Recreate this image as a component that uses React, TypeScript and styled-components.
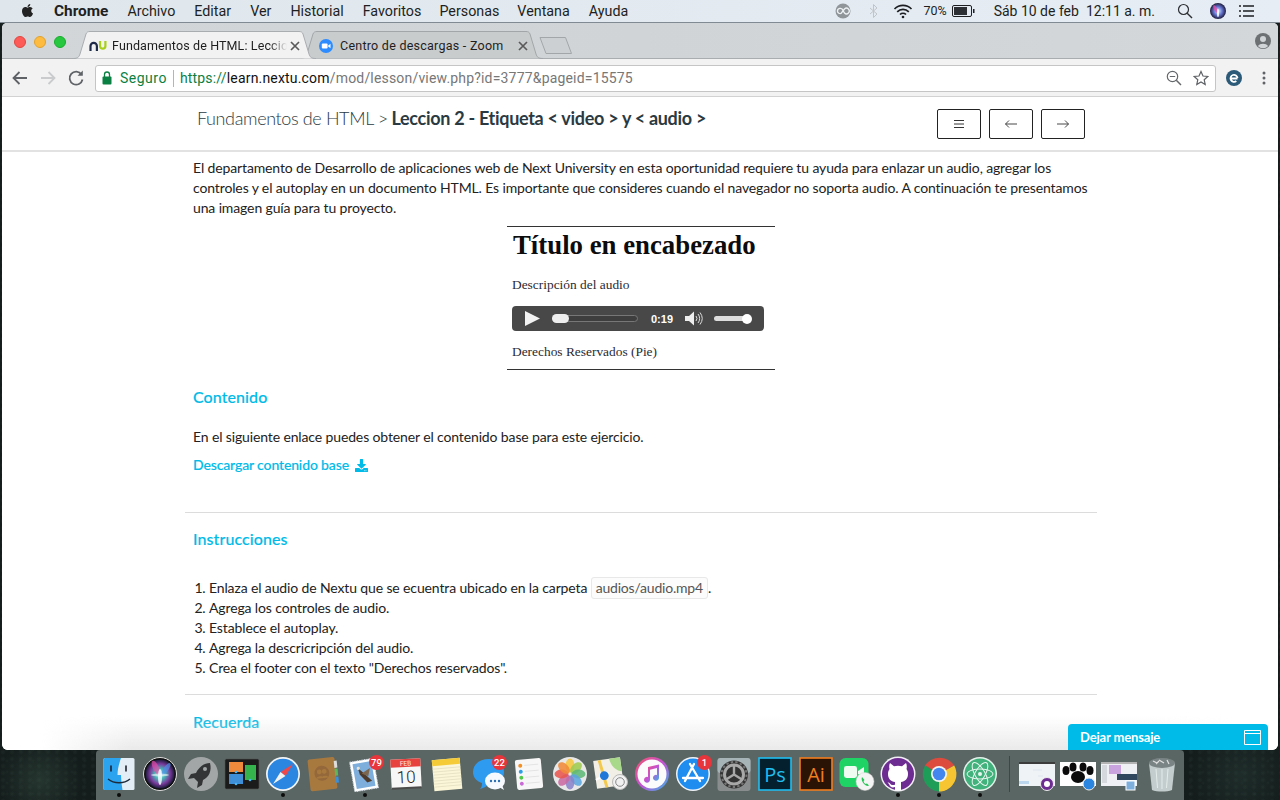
import React from "react";
import styled, { createGlobalStyle } from "styled-components";
import { FaApple, FaDownload } from "react-icons/fa";

const Global = createGlobalStyle`
  html, body { margin: 0; padding: 0; width: 1280px; height: 800px; overflow: hidden; background: #131c1b; }
  * { box-sizing: border-box; }
`;

const Desktop = styled.div`
  width: 1280px; height: 800px; overflow: hidden; display: flex; flex-direction: column;
  background:
    radial-gradient(circle at 3px 3px, rgba(70,95,80,.16) 0, transparent 3px) 0 0 / 9px 7px,
    radial-gradient(circle at 7px 2px, rgba(60,85,75,.14) 0, transparent 2px) 0 0 / 13px 11px,
    radial-gradient(circle at 40px 780px, #25352f 0, transparent 42px),
    radial-gradient(circle at 1240px 775px, #1e2c2a 0, transparent 50px),
    #141d1c;
`;

/* ---------- macOS menu bar ---------- */
const MenuBar = styled.header`
  height: 23px; flex: none; display: flex; align-items: center; padding: 0 0 1px 20px;
  background: linear-gradient(90deg, #dfe6ec, #e6edf4);
  color: #1d1f22; font: 14px/22px Roboto, "Liberation Sans", sans-serif; border-bottom: 1px solid #7f8a92;
`;
const MenuGroup = styled.nav`display: flex; align-items: center; font-size: 14.3px;`;
const AppleMark = styled(FaApple)`margin-right: 19px; color: #222;`;
const MenuItem = styled.span<{ $gap?: number; $bold?: boolean; $left?: number; $small?: boolean }>`
  margin-right: ${p => p.$gap ?? 0}px;
  margin-left: ${p => p.$left ?? 0}px;
  font-weight: ${p => (p.$bold ? 700 : 400)};
  font-size: ${p => (p.$bold ? "15.4px" : p.$small ? "12.5px" : "inherit")};
`;
const Status = styled.div`margin-left: auto; display: flex; align-items: center; padding-right: 26px;`;
const StatusGap = styled.span<{ $w: number }>`display: inline-block; flex: none; width: ${p => p.$w}px;`;

/* ---------- Chrome window ---------- */
const Window = styled.main`
  flex: none; height: 727px; margin: 0 2px; border-radius: 5px 5px 6px 6px; overflow: hidden;
  display: flex; flex-direction: column; background: #fff; position: relative;
`;
const TabStrip = styled.div`
  height: 36px; flex: none; display: flex; align-items: flex-end; padding-left: 12px;
  background: linear-gradient(90deg, #d2d6d9, #d0d4d7 50%, #d3d7da); border-bottom: 1px solid #a9adb0; position: relative;
`;
const Lights = styled.div`display: flex; gap: 8px; align-self: flex-start; margin-top: 13px; margin-right: 7px;`;
const Light = styled.span<{ $c: string; $b: string }>`
  width: 12px; height: 12px; border-radius: 50%; background: ${p => p.$c}; border: 1px solid ${p => p.$b};
`;
const Tab = styled.div<{ $active?: boolean }>`
  width: 243px; height: 28px; position: relative; display: flex; align-items: center;
  margin-bottom: -1px; margin-left: ${p => (p.$active ? 0 : -16)}px; z-index: ${p => (p.$active ? 2 : 1)};
  padding-left: ${p => (p.$active ? 16 : 17)}px; padding-top: 1px;
`;
const TabShape = styled.svg`position: absolute; inset: 0; width: 100%; height: 100%;`;
const TabBody = styled.div`position: relative; display: flex; align-items: center; flex: 1; font: 12.5px Roboto, "Liberation Sans", sans-serif; color: #1e1e1e;`;
const TabIcon = styled.span`width: 18px; height: 16px; display: flex; align-items: center; justify-content: center; margin-right: 5px;`;
const TabTitle = styled.span<{ $fade?: boolean }>`
  width: 175px; white-space: nowrap; letter-spacing: ${p => (p.$fade ? ".12px" : ".25px")};
  ${p => p.$fade ? "-webkit-mask-image: linear-gradient(90deg,#000 90%,transparent 100%); mask-image: linear-gradient(90deg,#000 90%,transparent 100%);" : ""}
`;
const NewTab = styled.svg`width: 34px; height: 17px; margin-left: -4px; margin-bottom: 4px; flex: none; position: relative; z-index: 0;`;
const Avatar = styled.svg`position: absolute; right: 7px; top: 10px; width: 16px; height: 16px;`;
const Toolbar = styled.div`
  height: 38px; flex: none; display: flex; align-items: center; padding: 1px 0 0 8px;
  background: #f2f2f2; border-bottom: 1px solid #d2d2d2; gap: 0;
`;
const NavBtn = styled.svg`width: 20px; height: 20px; flex: none; margin-right: 8px;`;
const AddressBar = styled.div`
  width: 1121px; height: 27px; margin-left: 1px; background: #fff; border: 1px solid #c5c5c5; border-radius: 3px;
  display: flex; align-items: center; padding: 0 0 0 5px; font: 14px Roboto, "Liberation Sans", sans-serif;
  letter-spacing: .18px;
`;
const Secure = styled.span`color: #0b8043; margin-left: 7px; letter-spacing: .5px;`;
const Sep = styled.span`width: 1px; height: 17px; background: #b5b5b5; margin: 0 6px;`;
const UrlDim = styled.span`color: #777;`;
const UrlHost = styled.span`color: #111;`;
const UrlScheme = styled.span`color: #0b8043;`;
const AddressEnd = styled.div`margin-left: auto; display: flex; align-items: center; gap: 11px; padding-right: 6px;`;
const Extras = styled.div`display: flex; align-items: center; margin-left: 10px; gap: 14px;`;
const SmallIcon = styled.svg<{ $w?: number; $h?: number }>`
  width: ${p => p.$w ?? 16}px; height: ${p => p.$h ?? 16}px; flex: none; display: block;
`;

/* ---------- page ---------- */
const Page = styled.div`
  flex: 1; position: relative; overflow: hidden; font: 14px/20px Lato, sans-serif; color: #222; background: #fff;
  letter-spacing: -.13px;
`;
const Header = styled.div`height: 55px; border-bottom: 2px solid #e2e2e2;`;
const HeaderInner = styled.div`
  width: 912px; margin: 0 0 0 183px; padding: 12px 12px 0; display: flex; justify-content: space-between; align-items: flex-start;
`;
const Crumb = styled.div`font: 300 18px/18px Lato, sans-serif; color: #2b3a42; letter-spacing: -.37px;`;
const CrumbStrong = styled.strong`font-weight: 700; font-size: 18px; color: #2b3a42; letter-spacing: -.3px; margin-left: -1px;`;
const Btns = styled.div`display: flex; gap: 8px;`;
const NavSquare = styled.button`
  width: 44px; height: 30px; border: 1px solid #222; border-radius: 2px; background: #fff; padding: 0;
  display: flex; align-items: center; justify-content: center;
`;
const Column = styled.div`width: 912px; margin-left: 183px; padding-top: 6px;`;
const Section = styled.section`padding: 0 8px;`;
const Para = styled.p<{ $top?: number }>`margin: ${p => p.$top ?? 0}px 0 0; width: 896px;`;
const Figure = styled.figure`
  width: 268px; height: 144px; margin: 8px auto 0; border-top: 1px solid #333; border-bottom: 1px solid #333;
  padding: 0 5px; font-family: "Liberation Serif", serif; color: #2a2a33; letter-spacing: 0;
`;
const FigTitle = styled.div`font: 700 26.8px/36px "Liberation Serif", serif; color: #0c0c0c; padding-left: 1px;`;
const FigText = styled.div<{ $top: number }>`font-size: 13.4px; line-height: 16px; margin-top: ${p => p.$top}px;`;
const Player = styled.div`
  width: 252px; height: 25px; margin-top: 13px; background: #484848; border-radius: 4px; display: flex; align-items: center;
  padding-left: 13px; color: #fff; font: 700 11px "Liberation Sans", sans-serif;
`;
const PlayIcon = styled.svg`width: 15px; height: 15px; flex: none;`;
const SpeakerIcon = styled.svg`width: 20px; height: 15px; flex: none; margin-left: 12px;`;
const Track = styled.span`width: 86px; height: 7px; margin-left: 12px; border: 1px solid #777; border-radius: 4px; display: block; background: #3e3e3e; position: relative;`;
const Progress = styled.span`position: absolute; left: -1px; top: -2px; width: 17px; height: 9px; background: #eee; border-radius: 5px;`;
const Time = styled.span`margin-left: 13px;`;
const VolumeBar = styled.span`width: 37px; height: 5px; background: #ddd; border-radius: 3px; margin-left: 9px; position: relative;`;
const Knob = styled.span`position: absolute; right: -1px; top: -2.5px; width: 10px; height: 10px; background: #fff; border-radius: 50%;`;
const Heading = styled.h3<{ $top: number }>`
  margin: ${p => p.$top}px 0 0; font: 500 16px/22px Lato, sans-serif; color: #00bbe8; letter-spacing: .08px;
  -webkit-text-stroke: .15px #00bbe8;
`;
const LinkRow = styled.a`
  display: flex; align-items: center; gap: 6px; margin-top: 8px; color: #00bbe8; font-weight: 500;
  -webkit-text-stroke: .15px #00bbe8;
`;
const Rule = styled.hr<{ $top: number }>`margin: ${p => p.$top}px 0 0; border: 0; border-top: 1px solid #dcdcdc;`;
const Steps = styled.ol`margin: 28px 0 0; padding: 0 0 0 16px;`;
const Code = styled.code`
  font: 14px Lato, sans-serif; color: #555; border: 1px solid #e8e8e8; border-radius: 3px; padding: 1px 4px 2px; background: #fcfcfc;
  letter-spacing: -.2px;
`;
const Widget = styled.div`
  position: absolute; right: 10px; bottom: 0; width: 200px; height: 26px; background: #00bbe8; border-radius: 4px 4px 0 0;
  color: #fff; font: 700 13px/26px Lato, sans-serif; padding: 0 7px 0 12px; display: flex; align-items: center; justify-content: space-between;
  letter-spacing: -.15px;
`;
const BottomFade = styled.div`
  position: absolute; left: 40px; right: 40px; bottom: 0; height: 34px; pointer-events: none;
  background: linear-gradient(180deg, rgba(225,225,225,0), rgba(225,225,225,.7));
  -webkit-mask-image: linear-gradient(90deg, transparent, #000 90px, #000 calc(100% - 90px), transparent);
  mask-image: linear-gradient(90deg, transparent, #000 90px, #000 calc(100% - 90px), transparent);
`;

/* ---------- Dock ---------- */
const Dock = styled.footer`
  flex: none; width: 1088px; height: 50px; margin-left: 96px; background: #5a6663; border-radius: 4px 4px 0 0;
  display: flex; padding-left: 2px;
`;
const Slot = styled.div`width: 41px; flex: none; position: relative; display: flex; flex-direction: column; align-items: center; padding-top: 6px;`;
const Indicator = styled.span<{ $on?: boolean }>`
  width: 4px; height: 4px; border-radius: 50%; margin-top: 1px; background: ${p => (p.$on ? "#0c0c0c" : "transparent")};
`;
const IconSvg = styled.svg`width: 36px; height: 36px; display: block; flex: none;`;
const Badge = styled.span`
  position: absolute; left: 25px; top: 5px; min-width: 15px; height: 15px; border-radius: 8px; background: #e8343b; color: #fff;
  font: 500 9.5px/15px Roboto, sans-serif; text-align: center;
`;
const DockSep = styled.span`width: 1px; height: 36px; background: #3d4745; margin: 6px 6px 0 9px; flex: none;`;
const TrashSlot = styled(Slot)`margin-left: 2px;`;

type I = { children: React.ReactNode };
const G = ({ children }: I) => <IconSvg viewBox="0 0 36 36">{children}</IconSvg>;

const Finder = () => (
  <G>
    <rect x="2.5" y="2" width="31" height="32" rx="1.5" fill="#e3edf6" />
    <path d="M4 2h16c-2 6-3.5 11-3.500 17H20c0 5 .5 10 1.500 15H4a1.500 1.500 0 0 1-1.500-1.500v-29A1.500 1.500 0 0 1 4 2z" fill="#2ba3ee" />
    <path d="M10 10v5M25 10v5" stroke="#223" strokeWidth="1.6" strokeLinecap="round" />
    <path d="M7 23c6 5 16 5 22 0" stroke="#1d2a3a" strokeWidth="1.3" fill="none" />
  </G>
);
const Siri = () => (
  <G>
    <defs><radialGradient id="sr"><stop offset="0" stopColor="#c9f4ee" /><stop offset=".35" stopColor="#49b8b6" /><stop offset=".7" stopColor="#7a3a9c" /><stop offset="1" stopColor="#1c1b3a" /></radialGradient></defs>
    <circle cx="18" cy="18" r="16.5" fill="#111" stroke="#ddd" strokeWidth="1" />
    <circle cx="18" cy="18" r="14.5" fill="url(#sr)" />
    <ellipse cx="14" cy="12" rx="3" ry="8" fill="#e24da8" opacity=".7" transform="rotate(-25 14 12)" />
    <ellipse cx="24" cy="13" rx="2.500" ry="7" fill="#4f8fe8" opacity=".7" transform="rotate(35 24 13)" />
    <ellipse cx="18" cy="21" rx="2" ry="8" fill="#f2fbff" opacity=".85" />
    <ellipse cx="18" cy="19" rx="9" ry="1.500" fill="#f2fbff" opacity=".6" />
  </G>
);
const Launchpad = () => (
  <G>
    <circle cx="18" cy="18" r="17" fill="#a3a6a7" />
    <path d="M27 7c-6 0-11 4-14 10l-5 1-3 5 6-1 4 4-1 6 5-3 1-5c6-3 9-9 7-17z" fill="#333436" />
    <circle cx="22" cy="13" r="2" fill="#a3a6a7" />
  </G>
);
const Mission = () => (
  <G>
    <rect x="1" y="3" width="34" height="30" rx="1.5" fill="#1b1b1b" stroke="#555" strokeWidth=".6" />
    <rect x="5" y="6" width="14" height="10" fill="#ef8a3c" />
    <rect x="21" y="9" width="11" height="15" fill="#35b24b" />
    <rect x="5" y="18" width="14" height="10" fill="#3f8fd8" />
    <circle cx="12" cy="16" r="1.3" fill="#45b5f5" /><circle cx="12" cy="28" r="1.3" fill="#45b5f5" /><circle cx="26" cy="24" r="1.3" fill="#45b5f5" />
  </G>
);
const Safari = () => (
  <G>
    <circle cx="18" cy="18" r="17" fill="#f3f5f7" />
    <circle cx="18" cy="18" r="15.3" fill="#2a86e0" />
    <path d="M28 8L15.500 16 20.500 20z" fill="#f0484a" />
    <path d="M8 28l7.500-12 5 4z" fill="#f2f2f2" />
  </G>
);
const Contacts = () => (
  <G>
    <g transform="rotate(-6 18 18)">
      <rect x="3" y="2" width="27" height="32" rx="2" fill="#a8793f" />
      <rect x="29" y="6" width="3" height="7" fill="#ddd" /><rect x="29" y="14" width="3" height="7" fill="#5cb75c" /><rect x="29" y="22" width="3" height="6" fill="#3a8fd8" />
      <circle cx="16" cy="17" r="7.500" fill="#94683a" />
      <circle cx="13.500" cy="15.500" r="2.400" fill="#a8793f" /><circle cx="18.500" cy="15.500" r="2.400" fill="#a8793f" />
      <path d="M10 22c0-3 7-3 7 0zM15 22c0-3 7-3 7 0z" fill="#a8793f" />
    </g>
  </G>
);
const Mail = () => (
  <G>
    <g transform="rotate(-10 17 19)">
      <rect x="5" y="4" width="24" height="30" fill="#fff" stroke="#cfd6df" strokeDasharray="1.400 1" />
      <rect x="7.500" y="6.500" width="19" height="25" fill="#7eaedc" />
      <path d="M12 11l5 6 7 9-5 1-6-9z" fill="#4f3b2c" />
      <path d="M15 17l9-4-3 8z" fill="#7d664e" />
      <circle cx="12.500" cy="11.500" r="1.600" fill="#e9e3d5" />
    </g>
  </G>
);
const Calendar = () => (
  <G>
    <g transform="rotate(-3 18 18)">
      <rect x="3" y="3" width="30" height="29" fill="#f7f7f7" />
      <rect x="3" y="3" width="30" height="8" fill="#e8423f" />
      <text x="18" y="9.700" textAnchor="middle" fontFamily="Roboto, sans-serif" fontSize="6.500" fill="#ffe7e4">FEB</text>
      <text x="18" y="27" textAnchor="middle" fontFamily="Roboto, sans-serif" fontWeight="300" fontSize="17" fill="#222">10</text>
      <rect x="3" y="31" width="30" height="2" fill="#4a4a4a" />
    </g>
  </G>
);
const Notes = () => (
  <G>
    <g transform="rotate(-5 18 18)">
      <rect x="4" y="3" width="28" height="31" fill="#fbf6d8" />
      <rect x="4" y="3" width="28" height="6" fill="#f5cc38" />
      <path d="M4 12h28M4 15h28M4 18h28M4 21h28M4 24h28M4 27h28M4 30h28" stroke="#dcd7b8" strokeWidth=".6" />
    </g>
  </G>
);
const Messages = () => (
  <G>
    <path d="M19 3c9 0 15 6 15 13s-5 12-12 13l-3-1c-2 2-5 4-9 5 2-2 2-4 2-6C6 25 3 21 3 16 3 8 10 3 19 3z" fill="#2f9bf0" />
    <ellipse cx="25" cy="25" rx="10" ry="8.500" fill="#f6fafe" />
    <path d="M29 31l5 3-2-5z" fill="#f6fafe" />
    <circle cx="21" cy="25" r="1.200" fill="#2d6fb5" /><circle cx="25" cy="25" r="1.200" fill="#2d6fb5" /><circle cx="29" cy="25" r="1.200" fill="#2d6fb5" />
  </G>
);
const Reminders = () => (
  <G>
    <g transform="rotate(-5 18 18)">
      <rect x="5" y="3" width="26" height="30" rx="2" fill="#f7f7f7" />
      <circle cx="10" cy="9" r="2" fill="#f38f23" /><circle cx="10" cy="15" r="2" fill="#2a9ee6" /><circle cx="10" cy="21" r="2" fill="#4fc947" /><circle cx="10" cy="27" r="2" fill="#c96ad6" />
      <path d="M14 9h14M14 15h14M14 21h14M14 27h14" stroke="#ddd" strokeWidth=".7" />
    </g>
  </G>
);
const Photos = () => {
  const cols = ["#f7c63e", "#9fcb4e", "#5fb875", "#5ba6de", "#8a83c9", "#c96aa2", "#e8574f", "#f08a3a"];
  return (
    <G>
      <circle cx="18" cy="18" r="17" fill="#e8e8e8" />
      {cols.map((c, i) => (
        <ellipse key={c} cx="18" cy="9.500" rx="4.400" ry="7" fill={c} opacity=".88" transform={`rotate(${i * 45} 18 18)`} />
      ))}
    </G>
  );
};
const Maps = () => (
  <G>
    <g transform="rotate(-8 16 17)">
      <rect x="2" y="3" width="27" height="28" fill="#f2efe6" />
      <path d="M18 3h11v14c-6-1-10-7-11-14z" fill="#a8d88a" />
      <path d="M8 3l4 28" stroke="#f2c94c" strokeWidth="3" />
      <path d="M2 22l14-5" stroke="#fff" strokeWidth="2" />
      <circle cx="11" cy="19" r="4.400" fill="#1f78d8" />
    </g>
    <circle cx="27" cy="26" r="7.500" fill="#f0f0f0" stroke="#b9b9b9" />
    <circle cx="27" cy="26" r="4.300" fill="none" stroke="#888" />
  </G>
);
const Music = () => (
  <G>
    <defs><linearGradient id="ms" x1="0" y1="0" x2="1" y2="1"><stop offset="0" stopColor="#f2546a" /><stop offset=".5" stopColor="#c452d4" /><stop offset="1" stopColor="#31b8e6" /></linearGradient></defs>
    <circle cx="18" cy="18" r="17" fill="url(#ms)" />
    <circle cx="18" cy="18" r="14.500" fill="#fbfbfb" />
    <path d="M14 11l11-2.500v13.300a3 3 0 1 1-2-2.800V12l-7 1.700v10.100a3 3 0 1 1-2-2.800z" fill="url(#ms)" />
  </G>
);
const AppStore = () => (
  <G>
    <circle cx="18" cy="18" r="17" fill="#f0f4f8" />
    <circle cx="18" cy="18" r="15.500" fill="#1f8cf0" />
    <path d="M19 8l-9 17M15 8l10 17M8 22h20" stroke="#fff" strokeWidth="2.300" strokeLinecap="round" />
  </G>
);
const SysPrefs = () => (
  <G>
    <rect x="1.500" y="2" width="33" height="33" rx="3" fill="#8a8d8e" />
    <rect x="1.500" y="2" width="33" height="15" rx="3" fill="#a6b4b8" />
    <circle cx="18" cy="18.500" r="14" fill="#333" />
    <circle cx="18" cy="18.500" r="9.500" fill="none" stroke="#a8a8a8" strokeWidth="3" />
    <path d="M18 18.500V9M18 18.500l8 5M18 18.500l-8 5" stroke="#a8a8a8" strokeWidth="2.400" />
    <circle cx="18" cy="18.500" r="12.500" fill="none" stroke="#777" strokeWidth="2" strokeDasharray="2.400 2.200" />
  </G>
);
const Adobe = ({ label, edge, bg }: { label: string; edge: string; bg: string }) => (
  <G>
    <rect x="2" y="2" width="32" height="32" fill={bg} stroke={edge} strokeWidth="1.600" />
    <text x="18" y="26" textAnchor="middle" fontFamily="'Open Sans', sans-serif" fontSize="20" fill={edge}>{label}</text>
  </G>
);
const FaceTime = () => (
  <G>
    <rect x="0.500" y="2" width="29" height="29" rx="6" fill="#1fd365" />
    <rect x="5" y="10" width="13" height="12" rx="2.400" fill="#eefcf2" />
    <path d="M19 15l6-4v11l-6-4z" fill="#eefcf2" />
    <circle cx="26" cy="25.500" r="9" fill="#f4f4f4" stroke="#ccc" strokeWidth=".5" />
    <path d="M23 21c-1 2 0 5 2 7s4 2.500 5 1.500l-2-2-1.500.5c-1-.5-1.500-1.500-2-3l1-1z" fill="#23c552" />
  </G>
);
const GitHub = () => (
  <G>
    <circle cx="18" cy="18" r="17.500" fill="#f1eef5" />
    <circle cx="18" cy="18" r="16" fill="#6d2c91" />
    <path d="M10 7l4 3.200c2.500-.7 5.500-.7 8 0L26 7c1 2 1 4.500.5 6 1 1.500 1.500 3 1.500 5 0 5-3 7.500-7 8v8.500h-6V31c-3 1-5 0-6-3l-1.500-1.500c2-.5 2.500 1 3.500 2 1 .7 2 .6 4 .3V26c-4-.5-7-3-7-8 0-2 .5-3.500 1.500-5-.5-1.500-.5-4 .5-6z" fill="#fff" />
  </G>
);
const ChromeLogo = () => (
  <G>
    <path d="M18 18L4 9.500A17.500 17.500 0 0 1 33.200 9.500z" fill="#dd4b3e" />
    <path d="M18 18L33.200 9.500A17.500 17.500 0 0 1 18 35.500z" fill="#f7c531" />
    <path d="M18 18L18 35.500A17.500 17.500 0 0 1 4 9.500z" fill="#1e9d58" />
    <circle cx="18" cy="18" r="8" fill="#f4f4f4" />
    <circle cx="18" cy="18" r="6.300" fill="#4486f0" />
  </G>
);
const Atom = () => (
  <G>
    <circle cx="18" cy="18" r="17" fill="#e5f2ec" />
    <circle cx="18" cy="18" r="15.500" fill="#42b27c" />
    <g fill="none" stroke="#e6f6ee" strokeWidth="1">
      <ellipse cx="18" cy="18" rx="13" ry="5" transform="rotate(60 18 18)" />
      <ellipse cx="18" cy="18" rx="13" ry="5" transform="rotate(-60 18 18)" />
      <ellipse cx="18" cy="18" rx="13" ry="5" />
    </g>
    <circle cx="18" cy="18" r="2" fill="#e6f6ee" />
  </G>
);
const ThumbMap = () => (
  <G>
    <rect x="0" y="6" width="36" height="24" fill="#f0f3f6" />
    <rect x="0" y="6" width="36" height="2" fill="#3c3c3c" />
    <rect x="0" y="25" width="10" height="3" fill="#bcd6ee" />
    <path d="M14 14h9M19 20h5" stroke="#dde5ee" />
    <circle cx="28" cy="28" r="6.500" fill="#6d2c91" stroke="#eee" />
    <circle cx="28" cy="28" r="3" fill="#fff" />
  </G>
);
const ThumbPaw = () => (
  <G>
    <rect x="0" y="6" width="36" height="24" fill="#fff" />
    <ellipse cx="18" cy="21" rx="7" ry="6" fill="#0b0b0b" />
    <ellipse cx="6" cy="14.500" rx="3.500" ry="4.500" fill="#0b0b0b" /><ellipse cx="13" cy="11" rx="3.500" ry="4.500" fill="#0b0b0b" />
    <ellipse cx="23" cy="11" rx="3.500" ry="4.500" fill="#0b0b0b" /><ellipse cx="30" cy="14.500" rx="3.500" ry="4.500" fill="#0b0b0b" />
    <circle cx="29" cy="28" r="6" fill="#2a86e0" stroke="#eee" />
  </G>
);
const ThumbSite = () => (
  <G>
    <rect x="0" y="6" width="36" height="24" fill="#eef0f3" />
    <rect x="0" y="6" width="36" height="2" fill="#b3b3b3" />
    <rect x="8" y="9" width="12" height="9" fill="#c9a3de" />
    <rect x="16" y="18" width="20" height="6" fill="#30475e" />
    <rect x="1" y="9" width="5" height="18" fill="#d5d9de" />
    <rect x="25" y="25" width="9" height="9" fill="#7eaedc" stroke="#fff" />
  </G>
);
const Trash = () => (
  <G>
    <path d="M5 7h26l-3 27c-5 2-15 2-20 0z" fill="#c3cdcd" />
    <ellipse cx="18" cy="7" rx="13" ry="5" fill="#7a8484" />
    <path d="M9 5l4 2M15 4l5 3M23 4l2 4M12 8l3-3" stroke="#e0e0e0" strokeWidth="1.200" />
    <path d="M12 13l1.500 19M18 13v20M24 13l-1.500 19" stroke="#e4ebeb" />
  </G>
);

const items: { el: React.ReactNode; on?: boolean; badge?: string }[] = [
  { el: <Finder />, on: true }, { el: <Siri /> }, { el: <Launchpad /> }, { el: <Mission /> }, { el: <Safari />, on: true },
  { el: <Contacts /> }, { el: <Mail />, on: true, badge: "79" }, { el: <Calendar /> }, { el: <Notes /> },
  { el: <Messages />, badge: "22" }, { el: <Reminders /> }, { el: <Photos /> }, { el: <Maps /> }, { el: <Music /> },
  { el: <AppStore />, badge: "1" }, { el: <SysPrefs /> },
  { el: <Adobe label="Ps" edge="#20bdf0" bg="#04202e" /> }, { el: <Adobe label="Ai" edge="#f07d20" bg="#2a1304" /> },
  { el: <FaceTime /> }, { el: <GitHub />, on: true }, { el: <ChromeLogo />, on: true }, { el: <Atom />, on: true },
];
const minis = [<ThumbMap key="a" />, <ThumbPaw key="b" />, <ThumbSite key="c" />];

const TabOutline = ({ fill, stroke }: { fill: string; stroke: string }) => (
  <TabShape viewBox="0 0 243 28" preserveAspectRatio="none">
    <path d="M0 27.500C5 27.500 6 26 7 23L13 3C13.600 1.200 15 .5 17 .5H226C228 .5 229.400 1.200 230 3L236 23C237 26 238 27.500 243 27.500" fill={fill} stroke={stroke} />
  </TabShape>
);
const Close = () => (
  <SmallIcon viewBox="0 0 16 16"><path d="M4 4l8 8M12 4l-8 8" stroke="#5a5a5a" strokeWidth="1.700" /></SmallIcon>
);

export default function App() {
  return (
    <Desktop>
      <Global />
      <MenuBar>
        <MenuGroup>
          <AppleMark size={15} />
          <MenuItem $bold $gap={19}>Chrome</MenuItem>
          <MenuItem $gap={19}>Archivo</MenuItem>
          <MenuItem $gap={19}>Editar</MenuItem>
          <MenuItem $gap={19}>Ver</MenuItem>
          <MenuItem $gap={19}>Historial</MenuItem>
          <MenuItem $gap={18}>Favoritos</MenuItem>
          <MenuItem $gap={18}>Personas</MenuItem>
          <MenuItem $gap={19}>Ventana</MenuItem>
          <MenuItem>Ayuda</MenuItem>
        </MenuGroup>
        <Status>
          <SmallIcon $w={20} viewBox="0 0 20 16">
            <circle cx="10" cy="8" r="7.500" fill="#8f9599" />
            <path d="M4.500 8.500a2.800 2.800 0 0 1 5.500-1l1.500 2.500a2.800 2.800 0 1 0 0-4L8 10.500a2.800 2.800 0 0 1-3.500-2z" fill="none" stroke="#eef1f3" strokeWidth="1.300" />
          </SmallIcon>
          <StatusGap $w={13} />
          <SmallIcon viewBox="0 0 16 16"><path d="M4 5l7 6-3.500 3.500V1.500L11 5l-7 6" fill="none" stroke="#c0c5c9" strokeWidth="1" /></SmallIcon>
          <StatusGap $w={11} />
          <SmallIcon $w={20} viewBox="0 0 20 16">
            <path d="M1.500 6a12 12 0 0 1 17 0M4.200 8.800a8.200 8.200 0 0 1 11.600 0M7 11.500a4.300 4.300 0 0 1 6 0" fill="none" stroke="#1d1f22" strokeWidth="1.700" />
            <circle cx="10" cy="14" r="1.300" fill="#1d1f22" />
          </SmallIcon>
          <StatusGap $w={10} />
          <MenuItem $small>70%</MenuItem>
          <StatusGap $w={5} />
          <SmallIcon $w={23} $h={12} viewBox="0 0 23 12">
            <rect x=".5" y=".5" width="19" height="11" rx="1.500" fill="none" stroke="#1d1f22" />
            <rect x="2" y="2" width="13" height="8" fill="#2c2f33" />
            <rect x="21" y="4" width="1.500" height="4" fill="#1d1f22" />
          </SmallIcon>
          <MenuItem $left={19}>Sáb 10 de feb</MenuItem>
          <MenuItem $left={7}>12:11 a. m.</MenuItem>
          <StatusGap $w={22} />
          <SmallIcon viewBox="0 0 16 16"><circle cx="6.500" cy="6.500" r="5" fill="none" stroke="#2b2e32" strokeWidth="1.200" /><path d="M10.200 10.200L15 15" stroke="#2b2e32" strokeWidth="1.400" /></SmallIcon>
          <StatusGap $w={17} />
          <SmallIcon viewBox="0 0 16 16">
            <defs><radialGradient id="sr2"><stop offset="0" stopColor="#d8f6f6" /><stop offset=".5" stopColor="#6a79d8" /><stop offset="1" stopColor="#1c1b3a" /></radialGradient></defs>
            <circle cx="8" cy="8" r="8" fill="url(#sr2)" />
            <ellipse cx="5.500" cy="6" rx="1.500" ry="4" fill="#e24da8" opacity=".8" transform="rotate(-25 5.500 6)" />
            <ellipse cx="8" cy="10" rx="1" ry="4" fill="#f2fbff" />
          </SmallIcon>
          <StatusGap $w={12} />
          <SmallIcon viewBox="0 0 16 16"><path d="M1 3h2M1 8h2M1 13h2M5 3h11M5 8h11M5 13h11" stroke="#1d1f22" strokeWidth="1.500" /></SmallIcon>
        </Status>
      </MenuBar>

      <Window>
        <TabStrip>
          <Lights>
            <Light $c="#fc5b57" $b="#e2463f" />
            <Light $c="#fdbc40" $b="#e1a12d" />
            <Light $c="#27c840" $b="#17ad2c" />
          </Lights>
          <Tab $active>
            <TabOutline fill="#f2f2f2" stroke="#a9adb0" />
            <TabBody>
              <TabIcon>
                <svg width="18" height="10" viewBox="0 0 18 10">
                  <path d="M1.500 10V5a3.200 3.200 0 0 1 6.400 0v5" fill="none" stroke="#1f2a48" strokeWidth="2.200" />
                  <path d="M11 0v5a2.700 2.700 0 0 0 5.400 0V0" fill="none" stroke="#a8cf1a" strokeWidth="2.200" />
                </svg>
              </TabIcon>
              <TabTitle $fade>Fundamentos de HTML: Leccio</TabTitle>
              <Close />
            </TabBody>
          </Tab>
          <Tab>
            <TabOutline fill="#c9cccd" stroke="#a3a6a8" />
            <TabBody>
              <TabIcon>
                <svg width="14" height="14" viewBox="0 0 14 14">
                  <circle cx="7" cy="7" r="7" fill="#2d8cff" />
                  <rect x="2.800" y="4.500" width="5.800" height="5" rx="1" fill="#fff" />
                  <path d="M9.200 6.500l2.300-1.700v4.400L9.200 7.500z" fill="#fff" />
                </svg>
              </TabIcon>
              <TabTitle>Centro de descargas - Zoom</TabTitle>
              <Close />
            </TabBody>
          </Tab>
          <NewTab viewBox="0 0 34 17">
            <path d="M1 .5H26.500L32.500 16.500H7z" fill="#cdd0d2" stroke="#a3a6a8" />
          </NewTab>
          <Avatar viewBox="0 0 16 16">
            <circle cx="8" cy="8" r="8" fill="#6d7073" />
            <circle cx="8" cy="6" r="3" fill="#d0d4d7" />
            <path d="M2.800 13a6 4.500 0 0 1 10.400 0A7 7 0 0 1 2.800 13z" fill="#d0d4d7" />
          </Avatar>
        </TabStrip>

        <Toolbar>
          <NavBtn viewBox="0 0 20 20"><path d="M17 10H3.500M9.500 4l-6 6 6 6" fill="none" stroke="#5f6266" strokeWidth="1.800" /></NavBtn>
          <NavBtn viewBox="0 0 20 20"><path d="M3 10h13.500M10.500 4l6 6-6 6" fill="none" stroke="#c9cbcd" strokeWidth="1.800" /></NavBtn>
          <NavBtn viewBox="0 0 20 20"><path d="M15.500 6.500a6.500 6.500 0 1 0 1 5" fill="none" stroke="#5f6266" strokeWidth="1.800" /><path d="M16.800 2.500v5.300h-5.300z" fill="#5f6266" /></NavBtn>
          <AddressBar>
            <SmallIcon $w={12} viewBox="0 0 12 16">
              <rect x="1.500" y="6.500" width="9" height="8" rx="1" fill="#0b8043" />
              <path d="M3.500 7V4.500a2.500 2.500 0 0 1 5 0V7" fill="none" stroke="#0b8043" strokeWidth="1.300" />
            </SmallIcon>
            <Secure>Seguro</Secure>
            <Sep />
            <span>
              <UrlScheme>https://</UrlScheme><UrlHost>learn.nextu.com</UrlHost><UrlDim>/mod/lesson/view.php?id=3777&amp;pageid=15575</UrlDim>
            </span>
            <AddressEnd>
              <SmallIcon viewBox="0 0 16 16">
                <circle cx="6.500" cy="6.500" r="5.200" fill="none" stroke="#65686b" strokeWidth="1.200" />
                <path d="M10.300 10.300L15 15" stroke="#65686b" strokeWidth="1.500" /><path d="M3.800 6.500h5.400" stroke="#65686b" strokeWidth="1.200" />
              </SmallIcon>
              <SmallIcon viewBox="0 0 16 16">
                <path d="M8 1.500l2 4.500 4.800.5-3.600 3.200 1 4.800L8 12l-4.200 2.500 1-4.800L1.200 6.500 6 6z" fill="none" stroke="#5f6266" strokeWidth="1.200" />
              </SmallIcon>
            </AddressEnd>
          </AddressBar>
          <Extras>
            <SmallIcon viewBox="0 0 16 16">
              <circle cx="8" cy="8" r="8" fill="#2b5a78" />
              <path d="M4.500 8.500h7M11.500 8a3.500 3.500 0 1 0-1.200 3" fill="none" stroke="#fff" strokeWidth="1.800" />
            </SmallIcon>
            <SmallIcon viewBox="0 0 16 16">
              <circle cx="8" cy="3" r="1.500" fill="#5f6266" /><circle cx="8" cy="8" r="1.500" fill="#5f6266" /><circle cx="8" cy="13" r="1.500" fill="#5f6266" />
            </SmallIcon>
          </Extras>
        </Toolbar>

        <Page>
          <Header>
            <HeaderInner>
              <Crumb>Fundamentos de HTML &gt; <CrumbStrong>Leccion 2 - Etiqueta &lt; video &gt; y &lt; audio &gt;</CrumbStrong></Crumb>
              <Btns>
                <NavSquare aria-label="Menú">
                  <SmallIcon viewBox="0 0 16 16"><path d="M3 4.500h10M3 8h10M3 11.500h10" stroke="#333" strokeWidth="1" /></SmallIcon>
                </NavSquare>
                <NavSquare aria-label="Anterior">
                  <SmallIcon viewBox="0 0 16 16"><path d="M14 8H2.500M6 4.500L2.500 8 6 11.500" fill="none" stroke="#333" strokeWidth=".9" /></SmallIcon>
                </NavSquare>
                <NavSquare aria-label="Siguiente">
                  <SmallIcon viewBox="0 0 16 16"><path d="M2 8h11.500M10 4.500L13.500 8 10 11.500" fill="none" stroke="#333" strokeWidth=".9" /></SmallIcon>
                </NavSquare>
              </Btns>
            </HeaderInner>
          </Header>
          <Column>
            <Section>
              <Para>
                El departamento de Desarrollo de aplicaciones web de Next University en esta oportunidad requiere tu ayuda para enlazar un audio, agregar los controles y el autoplay en un documento HTML. Es importante que consideres cuando el navegador no soporta audio. A continuación te presentamos una imagen guía para tu proyecto.
              </Para>
              <Figure>
                <FigTitle>Título en encabezado</FigTitle>
                <FigText $top={14}>Descripción del audio</FigText>
                <Player>
                  <PlayIcon viewBox="0 0 15 15"><path d="M0 0l15 7.500L0 15z" fill="#f2f2f2" /></PlayIcon>
                  <Track><Progress /></Track>
                  <Time>0:19</Time>
                  <SpeakerIcon viewBox="0 0 20 15">
                    <path d="M0 5h4l5-4.500v14L4 10H0z" fill="#eee" />
                    <path d="M11 5a4 4 0 0 1 0 5M13 3a7 7 0 0 1 0 9M15 1.500a10 10 0 0 1 0 12" fill="none" stroke="#ddd" />
                  </SpeakerIcon>
                  <VolumeBar><Knob /></VolumeBar>
                </Player>
                <FigText $top={13}>Derechos Reservados (Pie)</FigText>
              </Figure>
              <Heading $top={16}>Contenido</Heading>
              <Para $top={19}>En el siguiente enlace puedes obtener el contenido base para este ejercicio.</Para>
              <LinkRow>Descargar contenido base <FaDownload size={13} /></LinkRow>
            </Section>
            <Rule $top={37} />
            <Section>
              <Heading $top={15}>Instrucciones</Heading>
              <Steps>
                <li>Enlaza el audio de Nextu que se ecuentra ubicado en la carpeta <Code>audios/audio.mp4</Code>.</li>
                <li>Agrega los controles de audio.</li>
                <li>Establece el autoplay.</li>
                <li>Agrega la descricripción del audio.</li>
                <li>Crea el footer con el texto "Derechos reservados".</li>
              </Steps>
            </Section>
            <Rule $top={16} />
            <Section>
              <Heading $top={16}>Recuerda</Heading>
            </Section>
          </Column>
          <BottomFade />
          <Widget>
            Dejar mensaje
            <svg width="17" height="15" viewBox="0 0 17 15"><path d="M.5.500h16v14H.5zM.5 3.500h16" fill="none" stroke="#fff" /></svg>
          </Widget>
        </Page>
      </Window>

      <Dock>
        {items.map((it, i) => (
          <Slot key={i}>
            {it.el}
            <Indicator $on={it.on} />
            {it.badge && <Badge>{it.badge}</Badge>}
          </Slot>
        ))}
        <DockSep />
        {minis.map((m, i) => <Slot key={i}>{m}<Indicator /></Slot>)}
        <TrashSlot><Trash /><Indicator /></TrashSlot>
      </Dock>
    </Desktop>
  );
}
